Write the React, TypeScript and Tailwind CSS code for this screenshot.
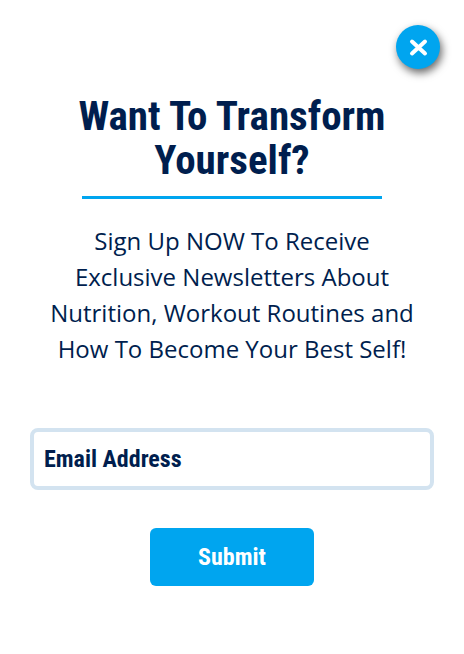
import React from 'react';

export default function App() {
  return (
    <main
      role="dialog"
      aria-labelledby="signup-title"
      className="relative bg-white px-[30px] pt-[94px] pb-[68px] text-center font-['Open_Sans','Noto_Sans',sans-serif] text-[#001e4e]"
    >
      <button
        type="button"
        aria-label="Close"
        className="absolute top-[25px] right-6 flex size-11 items-center justify-center rounded-full bg-[#00a5ef] text-white shadow-[2px_4px_8px_rgba(0,0,0,0.6)]"
      >
        <svg viewBox="0 0 20 20" className="size-5" fill="none" stroke="currentColor" strokeWidth="4" strokeLinecap="round" aria-hidden="true">
          <path d="M4 4.5 17 16.5M17 4.5 4 16.5" />
        </svg>
      </button>
      <h1
        id="signup-title"
        className="mx-auto max-w-[330px] font-['Roboto_Condensed',Roboto,sans-serif] text-[41px] leading-[44px] font-bold"
      >
        Want To Transform Yourself?
      </h1>
      <hr className="mx-auto mt-[14px] w-[300px] border-t-[3px] border-[#00a5ef]" />
      <p className="mx-auto mt-6 max-w-[380px] text-2xl leading-9">
        Sign Up NOW To Receive Exclusive Newsletters About Nutrition, Workout Routines and How To Become Your Best Self!
      </p>
      <form
        className="mt-[61px] font-['Roboto_Condensed',Roboto,sans-serif] text-2xl font-bold"
        onSubmit={(event) => event.preventDefault()}
      >
        <input
          type="email"
          aria-label="Email Address"
          placeholder="Email Address"
          className="block h-[62px] w-full rounded-lg border-4 border-[#d3e3f0] px-[10px] placeholder:text-[#001e4e] placeholder:opacity-100"
        />
        <button type="submit" className="mt-[38px] h-[58px] w-[164px] rounded-md bg-[#00a5ef] text-white">
          Submit
        </button>
      </form>
    </main>
  );
}
